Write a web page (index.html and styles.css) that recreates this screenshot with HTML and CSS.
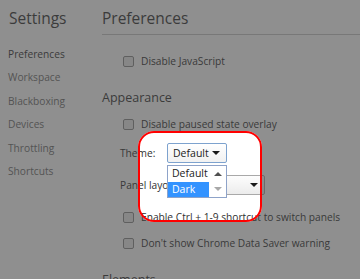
FILE: index.html
```html
<!DOCTYPE html>
<html>
<head>
<meta charset="utf-8">
<link rel="stylesheet" href="styles.css">
</head>
<body>
<div class="app">
  <nav class="sidebar">
    <div class="title">Settings</div>
    <ul class="tabs">
      <li class="tab selected">Preferences</li>
      <li class="tab">Workspace</li>
      <li class="tab">Blackboxing</li>
      <li class="tab">Devices</li>
      <li class="tab">Throttling</li>
      <li class="tab">Shortcuts</li>
    </ul>
  </nav>
  <main class="content">
    <div class="header">Preferences</div>
    <div class="row check first"><span class="box"></span><span>Disable JavaScript</span></div>
    <div class="section">Appearance</div>
    <div class="row check s1"><span class="box"></span><span>Disable paused state overlay</span></div>
    <div class="row field s2">
      <span class="label">Theme:</span>
      <div class="select-wrap">
        <div class="select focused"><span>Default</span><span class="caret"></span></div>
        <div class="listbox">
          <div class="options">
            <div class="option">Default</div>
            <div class="option active">Dark</div>
          </div>
          <div class="scroll">
            <span class="arrow up"></span>
            <span class="arrow down"></span>
          </div>
        </div>
      </div>
    </div>
    <div class="row field s3">
      <span class="label">Panel layout:</span>
      <div class="select panel"><span>Auto</span><span class="caret"></span></div>
    </div>
    <div class="row check s3"><span class="box"></span><span>Enable Ctrl + 1-9 shortcut to switch panels</span></div>
    <div class="row check s1"><span class="box"></span><span>Don't show Chrome Data Saver warning</span></div>
    <div class="section s4">Elements</div>
  </main>
</div>
<div class="spotlight"></div>
</body>
</html>
```
FILE: styles.css
```css
html, body {
  margin: 0;
  padding: 0;
  background: #ffffff;
  overflow: hidden;
}
body {
  width: 360px;
  height: 279px;
  position: relative;
  font-family: "Open Sans", "Noto Sans", sans-serif;
  font-size: 10.2px;
  color: #303030;
}
.app {
  display: flex;
  height: 279px;
}
.sidebar {
  width: 102px;
  flex: none;
  padding-left: 8px;
  box-sizing: border-box;
}
.title {
  font-size: 15.5px;
  line-height: 22px;
  padding-top: 7px;
  padding-left: 1px;
  color: #353535;
}
.tabs {
  list-style: none;
  margin: 14px 0 0 0;
  padding: 0;
}
.tab {
  height: 23.4px;
  line-height: 23.4px;
  color: #6f6f6f;
}
.tab.selected {
  color: #333333;
}
.content {
  flex: 1;
  display: flex;
  flex-direction: column;
}
.header {
  font-size: 15.5px;
  height: 35px;
  line-height: 36px;
  border-bottom: 1px solid #c8c8c8;
  color: #353535;
  box-sizing: border-box;
}
.row {
  height: 20px;
  display: flex;
  align-items: center;
  flex: none;
  white-space: nowrap;
}
.check {
  padding-left: 21px;
  gap: 7px;
}
.first { margin-top: 16px; }
.s1 { margin-top: 6px; }
.s2 { margin-top: 9px; }
.s3 { margin-top: 12px; }
.s4 { margin-top: 15px; }
.box {
  width: 9px;
  height: 9px;
  border: 1px solid #8c8c8c;
  border-radius: 2px;
  background: #ececec;
  flex: none;
}
.section {
  font-size: 12.5px;
  line-height: 20px;
  height: 20px;
  margin-top: 17px;
  color: #333333;
}
.field {
  padding-left: 18px;
}
.label {
  width: 47px;
  flex: none;
  white-space: nowrap;
}
.s3 .label { width: 75px; }
.select-wrap {
  position: relative;
  width: 60px;
  height: 20px;
}
.select {
  box-sizing: border-box;
  height: 20px;
  width: 60px;
  border: 1px solid #a9a9a9;
  border-radius: 2px;
  background: linear-gradient(#fdfdfd, #ececec);
  display: flex;
  align-items: center;
  justify-content: space-between;
  padding: 0 6px 0 5px;
  color: #222222;
  font-size: 10.5px;
}
.select.focused {
  border-color: #7da2ce;
  background: linear-gradient(#ffffff, #f1f1f1);
}
.select.panel {
  width: 70px;
}
.caret {
  width: 0;
  height: 0;
  border-left: 4px solid transparent;
  border-right: 4px solid transparent;
  border-top: 4px solid #1a1a1a;
}
.listbox {
  position: absolute;
  top: 22px;
  left: 0;
  width: 60px;
  height: 33px;
  box-sizing: border-box;
  border: 1px solid #8ea3c9;
  background: #ffffff;
  display: flex;
  z-index: 2;
  font-size: 10.5px;
}
.options {
  width: 41px;
}
.option {
  height: 15.5px;
  line-height: 15.5px;
  padding-left: 4px;
  color: #222222;
}
.option.active {
  background: #3393ff;
  color: #ffffff;
}
.scroll {
  flex: 1;
  display: flex;
  flex-direction: column;
  align-items: center;
  justify-content: space-around;
}
.arrow {
  width: 0;
  height: 0;
  border-left: 4px solid transparent;
  border-right: 4px solid transparent;
}
.arrow.up {
  border-bottom: 4px solid #505050;
}
.arrow.down {
  border-top: 4px solid #a8a8a8;
}
.spotlight {
  position: absolute;
  left: 138px;
  top: 131px;
  width: 124px;
  height: 91px;
  box-sizing: border-box;
  border: 2.5px solid #ff0000;
  border-radius: 16px;
  box-shadow: 0 0 0 600px rgba(64, 64, 64, 0.59);
  z-index: 5;
  pointer-events: none;
}
```
